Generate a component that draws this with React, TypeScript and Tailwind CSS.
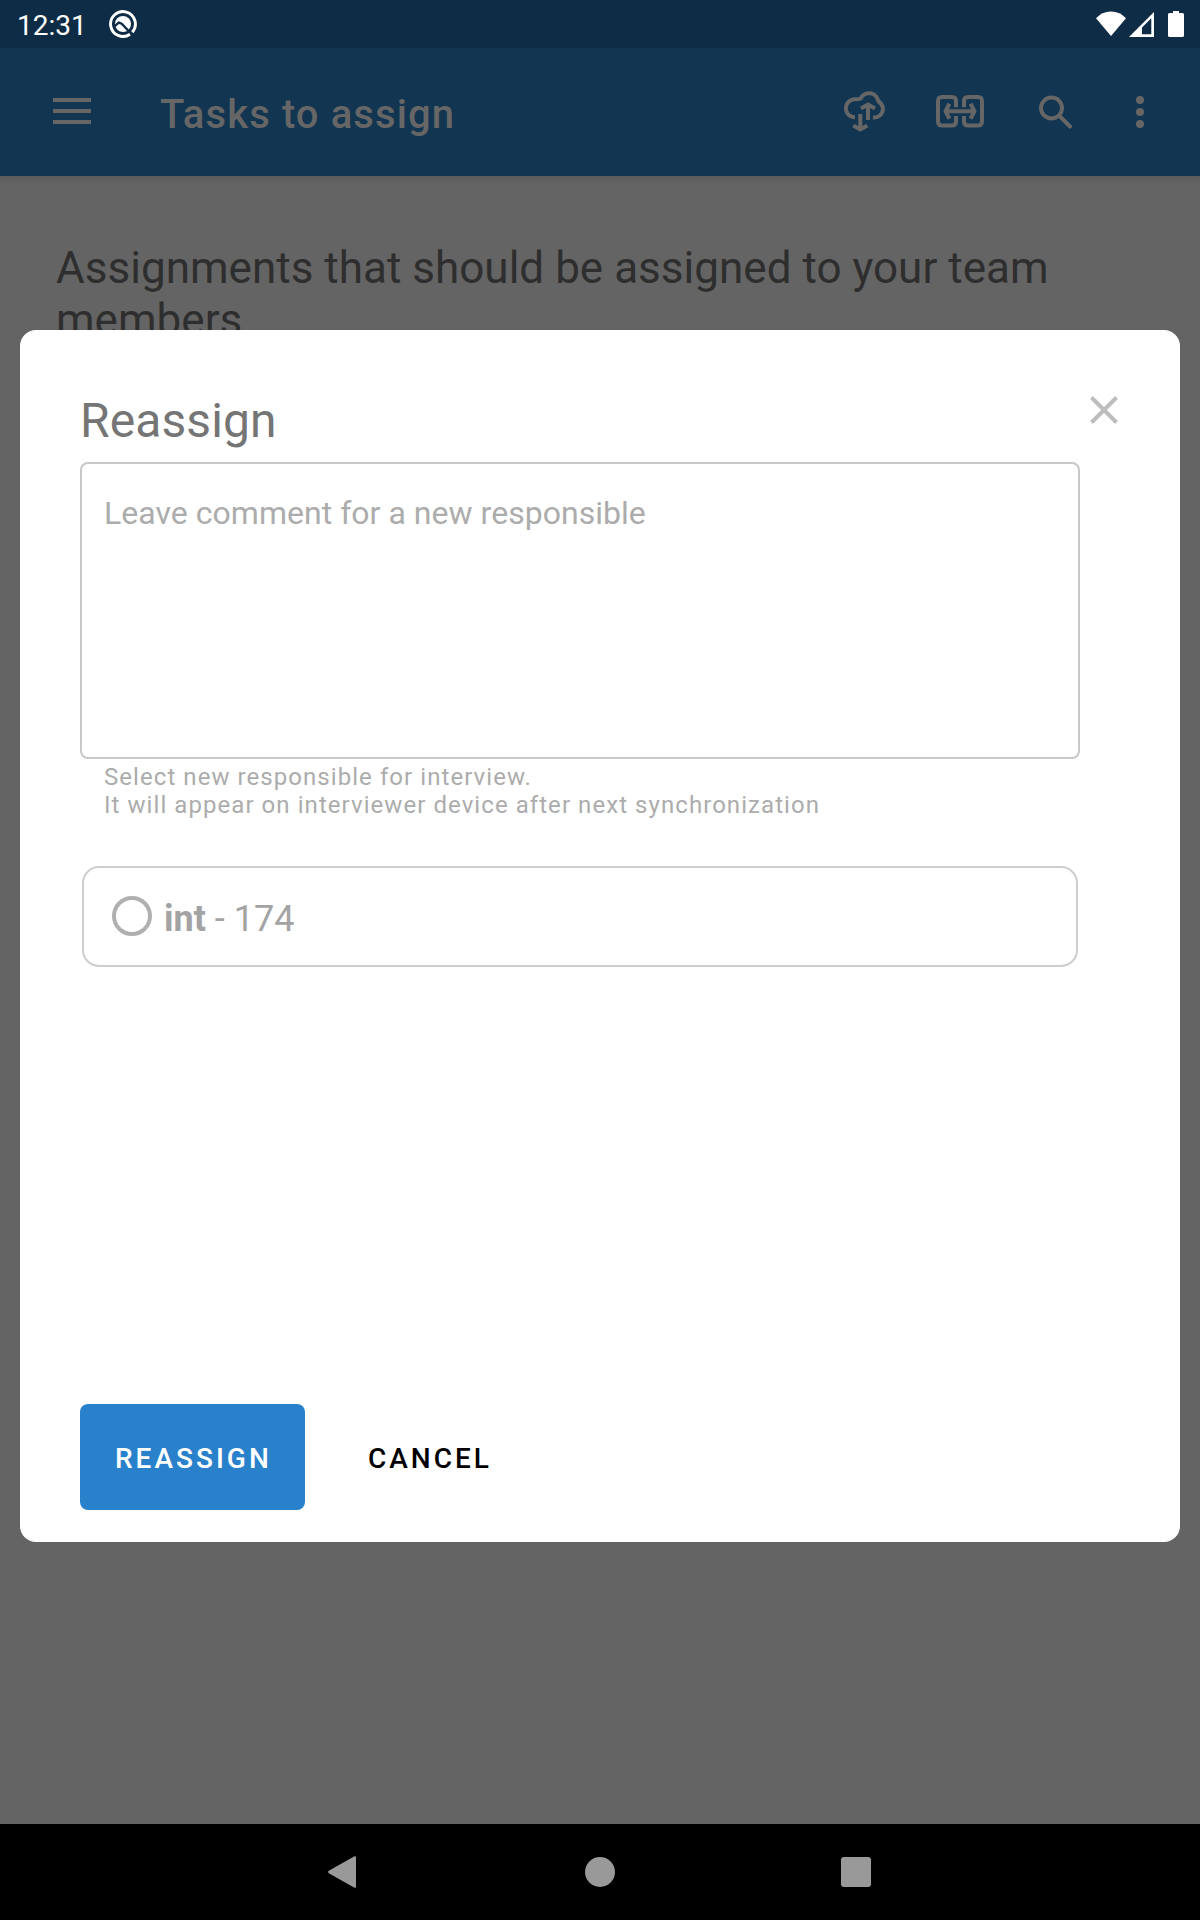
import React from "react";

function StatusBar() {
  return (
    <div className="flex h-12 items-center bg-[#0f2c46] pl-[17px] pr-4">
      <span className="w-[92px] pt-[3px] text-[28px] leading-[48px] text-white">12:31</span>
      <svg className="h-7 w-7" viewBox="0 0 28 28" fill="none">
        <path d="M23.300 22.200A12.400 12.400 0 1 0 21 24.250" stroke="#fff" strokeWidth="2.900" />
        <circle cx="14" cy="14" r="8" fill="#fff" />
        <path d="M5 16.800l4.700-4.200 3 1.200 8 8.300" stroke="#0f2c46" strokeWidth="2.300" />
      </svg>
      <svg className="ml-auto h-12 w-[92px]" viewBox="1092 0 92 48">
        <path d="M1111 36L1096 18.200Q1102 11.400 1111 11.400T1126 18.200z" fill="#fff" />
        <path fillRule="evenodd" d="M1154 12v25h-25zM1151.300 18.300L1142 27.600V34.300h9.300z" fill="#fff" />
        <path d="M1173 11h6v2h3.400q1.600 0 1.600 1.600v20.800q0 1.600-1.600 1.600h-12.800q-1.600 0-1.600-1.600V14.600q0-1.600 1.600-1.600h3.400z" fill="#fff" />
      </svg>
    </div>
  );
}

function Toolbar() {
  return (
    <header className="flex h-32 items-center bg-[#123551] pl-[53px]">
      <div className="flex w-[38px] flex-col gap-[7px] pb-[2px]">
        <div className="h-1 bg-[#666]" />
        <div className="h-1 bg-[#666]" />
        <div className="h-1 bg-[#666]" />
      </div>
      <h1 className="ml-[69px] pt-[6px] text-[40px] font-medium leading-[48px] tracking-[1.100px] text-[#666]">
        Tasks to assign
      </h1>
      <svg
        className="ml-auto h-32 w-[380px]"
        viewBox="820 48 380 128"
        fill="none"
        stroke="#666"
        strokeWidth="4"
        strokeLinejoin="round"
      >
        <path d="M855 117.300h-1A9.100 9.100 0 0 1 854 99.200q4.500 .2 6.800-.7A9.200 9.200 0 0 1 878.200 101C881 103 882.900 105.500 882.900 109A8.500 8.500 0 0 1 873 117.300" />
        <path d="M868 120v-15M861 108.500l7-4 7 4M860.300 114v15M853.300 125.500l7 4 7-4" />
        <path d="M956 107.300V101q0-4-4-4h-10q-4 0-4 4v20.500q0 4 4 4h10q4 0 4-4V116M964 107.300V101q0-4 4-4h10q4 0 4 4v20.500q0 4-4 4h-10q-4 0-4-4V116" />
        <path d="M945.500 111.200h29M949.500 103.700l-4 7.500 4 7.500M970.500 103.700l4 7.500-4 7.500" />
        <circle cx="1051.500" cy="108" r="10.500" />
        <path d="M1059.500 116l10.500 10.500" strokeLinecap="round" />
        <g fill="#666" stroke="none">
          <circle cx="1140" cy="100" r="4" />
          <circle cx="1140" cy="112" r="4" />
          <circle cx="1140" cy="124" r="4" />
        </g>
      </svg>
    </header>
  );
}

function NavigationBar() {
  return (
    <nav className="flex h-24 items-center bg-black pl-[328px] pr-[329px]">
      <svg className="h-8 w-7" viewBox="0 0 28 32">
        <path d="M28 1.500v29q0 2-2 1L.8 17.200q-1.500-1.200 0-2.400L26 .5q2-1 2 1z" fill="#999" />
      </svg>
      <div className="ml-[229px] h-[30px] w-[30px] rounded-full bg-[#999]" />
      <div className="ml-auto h-[30px] w-[30px] rounded-[3px] bg-[#999]" />
    </nav>
  );
}

function ReassignDialog() {
  return (
    <section
      role="dialog"
      className="absolute left-5 top-[330px] flex h-[1212px] w-[1160px] flex-col rounded-2xl bg-white px-[60px] pb-8 pt-[62px]"
    >
      <div className="flex justify-between">
        <h2 className="pb-px pt-px text-[48px] leading-[56px] tracking-[0.100px] text-[#757575]">Reassign</h2>
        <svg className="mr-[2px] mt-1 h-7 w-7" viewBox="0 0 28 28" stroke="#bdbdbd" strokeWidth="4">
          <path d="M1.500 1.500l25 25M26.500 1.500l-25 25" />
        </svg>
      </div>
      <div className="mt-[12px] h-[297px] w-[1000px] rounded-lg border-2 border-[#c8c8c8] px-[22px] pt-[30px] text-[32px] leading-[38px] tracking-[0.030px] text-[#acacac]">
        Leave comment for a new responsible
      </div>
      <p className="mt-1 pl-6 text-[24px] leading-[28px] tracking-[1.060px] text-[#acacac]">
        Select new responsible for interview.
        <br />
        It will appear on interviewer device after next synchronization
      </p>
      <div className="ml-0.5 mt-[47px] flex h-[101px] w-[996px] items-center rounded-[17px] border-2 border-[#cecece] pl-7">
        <span className="mb-px h-10 w-10 rounded-full border-4 border-[#b0b0b0]" />
        <span className="ml-3 pt-1 text-[36px] leading-[42px] text-[#a3a3a3]">
          <b className="font-bold">int</b> - 174
        </span>
      </div>
      <div className="mt-auto flex text-[28px] font-medium leading-[106px] tracking-[3px]">
        <button className="h-[106px] w-[225px] rounded-lg bg-[#2a81cb] pl-[35px] pt-[2px] text-left text-white">REASSIGN</button>
        <button className="ml-[63px] h-[106px] pt-[2px] text-black">CANCEL</button>
      </div>
    </section>
  );
}

export default function App() {
  return (
    <div className="relative flex h-[1920px] w-[1200px] flex-col overflow-hidden bg-[#646464] font-['Roboto',sans-serif]">
      <StatusBar />
      <Toolbar />
      <main className="flex-1">
        <div className="h-2 bg-linear-to-b from-[#5a5a5a] to-[#646464]" />
        <p className="w-[1060px] pl-14 pt-[58px] text-[44px] leading-[52px] tracking-[0.020px] text-[#2e2e2e]">
          Assignments that should be assigned to your team members
        </p>
      </main>
      <NavigationBar />
      <ReassignDialog />
    </div>
  );
}
